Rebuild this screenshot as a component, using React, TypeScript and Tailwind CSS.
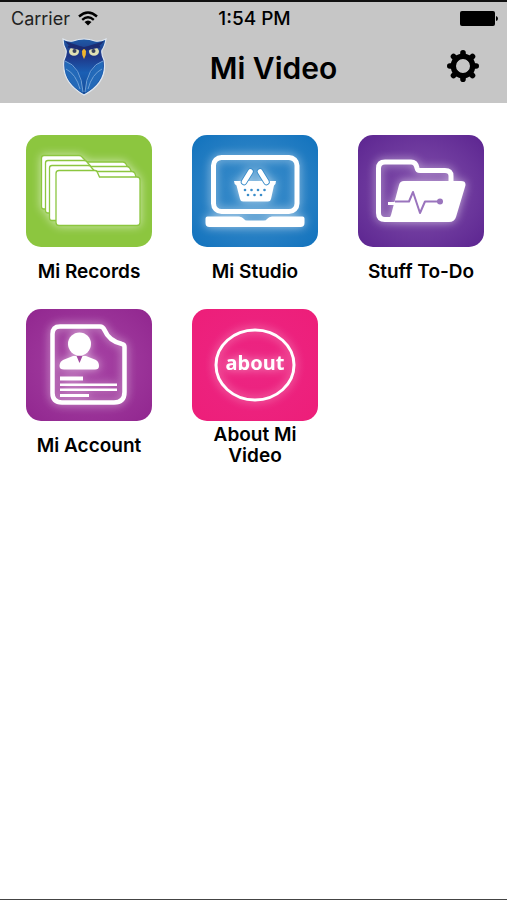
import React from 'react';

type Tile = {
  label: string;
  color: string;
  icon: React.ReactNode;
};

const GLOW = 'h-full w-full drop-shadow-[0_0_5px_rgba(255,255,255,0.6)]';

const RecordsIcon = () => (
  <svg viewBox="0 0 126 112" className={GLOW} fill="#fff" stroke="#8cc63f" strokeWidth="1.300" aria-hidden="true">
    <path d="M18 20.500H53Q55 20.500 56 22L61 27H97Q99 27 100 29L102 33V74H18Q15.500 74 15.500 71.500V23Q15.500 20.500 18 20.500Z" />
    <path d="M22 25.500H58Q60 25.500 61 27L65 31.500H101Q103 31.500 104 33.500L106 38V78H22Q19.500 78 19.500 75.500V28Q19.500 25.500 22 25.500Z" />
    <path d="M26 30.500H62Q64 30.500 65 32L69 36.500H106Q108 36.500 109 38.500L110 42V85.500H26Q23.500 85.500 23.500 83V33Q23.500 30.500 26 30.500Z" />
    <path d="M33 35.500H69Q71 35.500 71.500 37.500L73.500 42H111Q114 42 114 45V87.500Q114 90.500 111 90.500H33Q30 90.500 30 87.500V38.500Q30 35.500 33 35.500Z" />
  </svg>
);

const StudioIcon = () => (
  <svg viewBox="0 0 126 112" className={GLOW} fill="#fff" aria-hidden="true">
    <rect x="21.500" y="22.500" width="83.500" height="54" rx="8" fill="none" stroke="#fff" strokeWidth="5" />
    <path d="M15.500 81.500H47Q50 81.500 52 84Q53 85.500 55 85.500H72Q74 85.500 75 84Q77 81.500 80 81.500H110.500Q112.500 81.500 112.500 83.500V88Q112.500 92 108.500 92H17.500Q13.500 92 13.500 88V83.500Q13.500 81.500 15.500 81.500Z" />
    <path d="M42 46H84Q84 49 82 50.500L79 64Q78.500 66.500 76 66.500H51Q48.500 66.500 48 64L44.500 50.500Q42 49 42 46Z" />
    <path d="M52 47L58.500 36.500M68 36.500L74.500 47" stroke="#3a8dca" strokeWidth="6.500" strokeLinecap="round" />
    <path d="M52 47L58.500 36.500M68 36.500L74.500 47" stroke="#fff" strokeWidth="4.800" strokeLinecap="round" />
    <g fill="#3a8dca">
      <circle cx="53" cy="55" r="1.300" />
      <circle cx="59.500" cy="55" r="1.300" />
      <circle cx="66" cy="55" r="1.300" />
      <circle cx="72.500" cy="55" r="1.300" />
      <circle cx="56" cy="60" r="1.300" />
      <circle cx="62.500" cy="60" r="1.300" />
      <circle cx="69" cy="60" r="1.300" />
    </g>
  </svg>
);

const TodoIcon = () => (
  <svg viewBox="0 0 126 112" className={GLOW} fill="none" aria-hidden="true">
    <path
      d="M93 46V41Q93 35.500 87 35.500H62Q59.500 35.500 59 33Q58 27 53 27H27Q20.500 27 20.500 33.500V78Q20.500 84.500 27 84.500H40"
      stroke="#fff"
      strokeWidth="5"
    />
    <path d="M46 46H103Q109 46 107 52L98 82Q96.500 87 91 87H25Q31 86 33 80L41 50Q42 46 46 46Z" fill="#fff" />
    <path d="M30 68.500H39" stroke="#fff" strokeWidth="3" />
    <path d="M37 66.500H51L55 57L62 78L67 66.500H81" stroke="#9a74bd" strokeWidth="2" strokeLinejoin="round" />
    <circle cx="82" cy="66.500" r="3" fill="#9a74bd" />
  </svg>
);

const AccountIcon = () => (
  <svg viewBox="0 0 126 112" className={GLOW} fill="#fff" aria-hidden="true">
    <path
      d="M34 17.500H74Q77 17.500 78.500 21Q83 32 96 35Q98.500 35.500 98.500 38V83Q98.500 93.500 88 93.500H36Q26.500 93.500 26.500 84V25Q26.500 17.500 34 17.500Z"
      fill="none"
      stroke="#fff"
      strokeWidth="4.500"
    />
    <circle cx="53.500" cy="35" r="11.500" />
    <path d="M47 47H60L70 51Q73 53 73 57Q73 60.500 69 60.500H38Q33.500 60.500 33.500 57Q33.500 53 37 51Z" />
    <path d="M50.500 47H56.500L53.500 54Z" fill="#a349a0" />
    <rect x="34" y="67.500" width="23" height="4" />
    <rect x="34" y="74.500" width="57" height="2.500" />
    <rect x="34" y="79.500" width="57" height="2.500" />
    <rect x="34" y="85" width="29" height="3" />
  </svg>
);

const AboutIcon = () => (
  <svg viewBox="0 0 126 112" className={GLOW} aria-hidden="true">
    <ellipse cx="63" cy="56" rx="39" ry="35" fill="none" stroke="#fff" strokeWidth="3" />
    <text x="63" y="61" textAnchor="middle" fill="#fff" fontFamily="'Noto Sans', sans-serif" fontWeight="700" fontSize="20">
      about
    </text>
  </svg>
);

const OwlLogo = () => (
  <svg viewBox="0 0 48 58" className="h-[58px] w-[48px] shrink-0" role="img" aria-label="Owl logo">
    <defs>
      <linearGradient id="owlBody" x1="0" y1="0" x2="0" y2="1">
        <stop offset="0" stopColor="#1f5aa6" />
        <stop offset="0.300" stopColor="#1f3585" />
        <stop offset="0.600" stopColor="#1a5fb4" />
        <stop offset="1" stopColor="#164a96" />
      </linearGradient>
    </defs>
    <path
      d="M3 1Q8 4 13 3Q24-1 35 3Q40 4 46 1Q45 8 42 12Q41 16 44 22Q48 44 24 57Q1 44 4 22Q7 16 6 12Q3 7 3 1Z"
      fill="url(#owlBody)"
      stroke="#dfe7f0"
      strokeWidth="1.200"
    />
    <path d="M5 3Q16 7 24 9Q32 7 44 3Q40 9 32 10L24 14L16 10Q9 9 5 3Z" fill="#1b2c72" />
    <path d="M5 23Q20 30 23 55Q3 44 5 23ZM43 23Q28 30 25 55Q45 44 43 23Z" fill="#2369b8" />
    <path
      d="M5 23Q21 28 23 54M6 31Q16 36 20 51M43 23Q27 28 25 54M42 31Q32 36 28 51"
      fill="none"
      stroke="#6fa0d6"
      strokeWidth="1"
    />
    <ellipse cx="14" cy="13.500" rx="5" ry="4.300" fill="#e0e0b4" />
    <ellipse cx="34" cy="13.500" rx="5" ry="4.300" fill="#e0e0b4" />
    <circle cx="14.500" cy="13" r="2" fill="#38405c" />
    <circle cx="33.500" cy="13" r="2" fill="#38405c" />
    <path d="M8 8.500L20 11M40 8.500L28 11" stroke="#1b2c72" strokeWidth="2" />
    <path d="M22 13Q24 9 26 13Q26.500 17 24 21Q21.500 17 22 13Z" fill="#f0b52e" />
  </svg>
);

const WifiIcon = () => (
  <svg viewBox="0 0 20 15" className="h-[15px] w-5" fill="none" stroke="#000" strokeWidth="2.400" aria-hidden="true">
    <path d="M1 5.500Q10-2.500 19 5.500M4.200 8.800Q10 3.800 15.800 8.800" />
    <path d="M6.500 11Q10 8 13.500 11L10 14.500Z" fill="#000" stroke="none" />
  </svg>
);

const BatteryIcon = () => (
  <svg viewBox="0 0 38 15" className="h-[15px] w-[38px]" role="img" aria-label="Battery full">
    <rect width="35" height="15" rx="2" />
    <path d="M36 5Q38 5.500 38 7.500Q38 9.500 36 10Z" />
  </svg>
);

const GearIcon = () => (
  <svg viewBox="0 0 32 32" className="h-8 w-8" fill="none" stroke="#000" aria-hidden="true">
    <circle cx="16" cy="16" r="9.700" strokeWidth="5.400" />
    <path
      d="M16 2.800V6M16 26V29.200M2.800 16H6M26 16H29.200M6.500 6.500L9 9M23 23L25.500 25.500M6.500 25.500L9 23M23 9L25.500 6.500"
      strokeWidth="5.600"
      strokeLinecap="round"
    />
  </svg>
);

const tiles: Tile[] = [
  { label: 'Mi Records', color: 'bg-[#8cc63f]', icon: <RecordsIcon /> },
  { label: 'Mi Studio', color: 'bg-radial from-[#3d90cc] to-[#0f72bd]', icon: <StudioIcon /> },
  { label: 'Stuff To-Do', color: 'bg-radial from-[#8450ad] to-[#5c2490]', icon: <TodoIcon /> },
  { label: 'Mi Account', color: 'bg-radial from-[#a743a5] to-[#91268f]', icon: <AccountIcon /> },
  { label: 'About Mi Video', color: 'bg-radial from-[#ec2583] to-[#ed1e79]', icon: <AboutIcon /> },
];

const TileButton: React.FC<{ tile: Tile }> = ({ tile }) => (
  <button type="button" className="flex flex-col items-center">
    <span className={`block aspect-[126/112] w-full overflow-hidden rounded-[15px] ${tile.color}`}>{tile.icon}</span>
    <span className="flex h-12 max-w-28 items-center text-center text-[19px] leading-[21px] font-semibold">
      {tile.label}
    </span>
  </button>
);

export default function App() {
  return (
    <div className="flex min-h-screen flex-col border-b border-[#444] bg-white font-['Inter',sans-serif] text-black">
      <header className="border-t-2 border-[#111] bg-[#c6c6c6]">
        <div className="grid h-[33px] grid-cols-3 items-center pr-[9px] pl-[11px] text-lg">
          <span className="flex items-center gap-2 text-[#222]">
            Carrier
            <WifiIcon />
          </span>
          <span className="text-center text-[19px] font-medium">1:54 PM</span>
          <span className="flex justify-end">
            <BatteryIcon />
          </span>
        </div>
        <div className="flex h-[68px] items-start justify-between pt-[3px] pr-[28px] pl-[60px]">
          <OwlLogo />
          <h1 className="pt-[10px] text-[30px] leading-10 font-semibold">Mi Video</h1>
          <button type="button" aria-label="Settings" className="flex h-14 w-10 items-center justify-end">
            <GearIcon />
          </button>
        </div>
      </header>
      <main className="grid grid-cols-3 gap-x-10 gap-y-[14px] pt-8 pr-[23px] pl-[26px]">
        {tiles.map((tile) => (
          <TileButton key={tile.label} tile={tile} />
        ))}
      </main>
    </div>
  );
}
